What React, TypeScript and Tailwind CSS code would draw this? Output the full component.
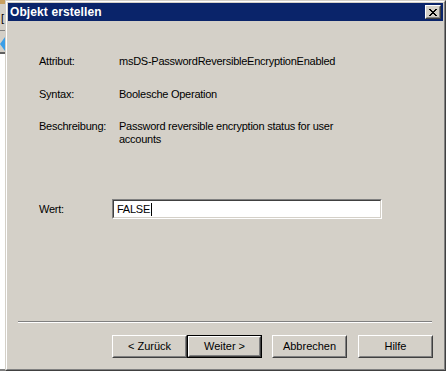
import React from "react";

function WinButton({ label, isDefault }: { label: string; isDefault?: boolean }) {
  const inner = (
    <div className="h-full w-full border border-t-white border-l-white border-r-[#404040] border-b-[#404040]">
      <div className="h-full w-full border border-t-[#d4d0c8] border-l-[#d4d0c8] border-r-[#808080] border-b-[#808080] flex items-center justify-center text-[11px] leading-none text-black">
        {label}
      </div>
    </div>
  );
  if (isDefault) {
    return <div className="w-[75px] h-[23px] border border-black">{inner}</div>;
  }
  return <div className="w-[75px] h-[23px]">{inner}</div>;
}

export default function App() {
  return (
    <div
      className="w-[446px] h-[371px] flex bg-[#d4d0c8] overflow-hidden"
      style={{ fontFamily: '"Liberation Sans", Arial, sans-serif' }}
    >
      {/* background app strip */}
      <div className="w-[5px] h-full flex flex-col">
        <div className="h-[4px] bg-[#c8a060]" />
        <div className="h-[26px] bg-[#d4d0c8] relative overflow-hidden">
          <span className="absolute left-[1px] top-[9px] text-[11px] leading-none text-black">[</span>
        </div>
        <div className="h-[1px] bg-[#808080]" />
        <div className="h-[6px] bg-[#d4d0c8]" />
        <div className="h-[14px] bg-[#d4d0c8] flex items-center">
          <svg width="5" height="14" viewBox="0 0 5 14">
            <polygon points="5,0 0,7 5,14" fill="#3a9ee8" />
          </svg>
        </div>
        <div className="h-[1px] bg-[#d4d0c8]" />
        <div className="h-[2px] bg-[#606060]" />
        <div className="flex-1 bg-white" />
        <div className="h-[2px] bg-[#808080]" />
      </div>

      {/* dialog window */}
      <div className="w-[441px] h-[371px] border border-t-[#d4d0c8] border-l-[#d4d0c8] border-r-[#404040] border-b-[#404040]">
        <div className="h-full w-full border border-t-white border-l-white border-r-[#808080] border-b-[#808080] p-[1px] flex flex-col">
          {/* title bar */}
          <div className="h-[18px] bg-[#0a246a] flex items-center justify-between pl-[2px] pr-[2px]">
            <span className="text-white font-bold text-[12px] leading-none tracking-[0.1px]">
              Objekt erstellen
            </span>
            <div className="w-[16px] h-[14px] border border-t-white border-l-white border-r-[#404040] border-b-[#404040] bg-[#d4d0c8]">
              <div className="h-full w-full border border-t-[#d4d0c8] border-l-[#d4d0c8] border-r-[#808080] border-b-[#808080] flex items-center justify-center">
                <svg width="8" height="7" viewBox="0 0 8 7" shapeRendering="crispEdges">
                  <path d="M0 0h2v1H0zM6 0h2v1H6zM1 1h2v1H1zM5 1h2v1H5zM2 2h4v1H2zM3 3h2v1H3zM2 4h4v1H2zM1 5h2v1H1zM5 5h2v1H5zM0 6h2v1H0zM6 6h2v1H6z" fill="#000" />
                </svg>
              </div>
            </div>
          </div>

          {/* content */}
          <div className="flex-1 flex flex-col text-[11px] leading-[13px] tracking-[-0.25px] text-black">
            <div className="mt-[34px] flex pl-[31px]">
              <div className="w-[80px]">Attribut:</div>
              <div>msDS-PasswordReversibleEncryptionEnabled</div>
            </div>
            <div className="mt-[20px] flex pl-[31px]">
              <div className="w-[80px]">Syntax:</div>
              <div>Boolesche Operation</div>
            </div>
            <div className="mt-[19px] flex pl-[31px]">
              <div className="w-[80px] shrink-0">Beschreibung:</div>
              <div className="w-[228px]">Password reversible encryption status for user accounts</div>
            </div>
            <div className="mt-[53px] flex items-center pl-[31px]">
              <div className="w-[73px]">Wert:</div>
              <div className="w-[270px] h-[20px] border border-t-[#808080] border-l-[#808080] border-r-white border-b-white">
                <div className="h-full w-full border border-t-[#404040] border-l-[#404040] border-r-[#d4d0c8] border-b-[#d4d0c8] bg-white flex items-center pl-[3px]">
                  <span>FALSE</span>
                  <span className="w-[1px] h-[13px] bg-black ml-[1px]" />
                </div>
              </div>
            </div>
            <div className="mt-[102px] ml-[10px] mr-[11px] h-[2px] border-t border-t-[#808080] border-b border-b-white" />
            <div className="mt-[12px] flex justify-end pr-[10px] tracking-normal">
              <WinButton label="< Zurück" />
              <WinButton label="Weiter >" isDefault />
              <div className="w-[10px]" />
              <WinButton label="Abbrechen" />
              <div className="w-[11px]" />
              <WinButton label="Hilfe" />
            </div>
          </div>
        </div>
      </div>
    </div>
  );
}
